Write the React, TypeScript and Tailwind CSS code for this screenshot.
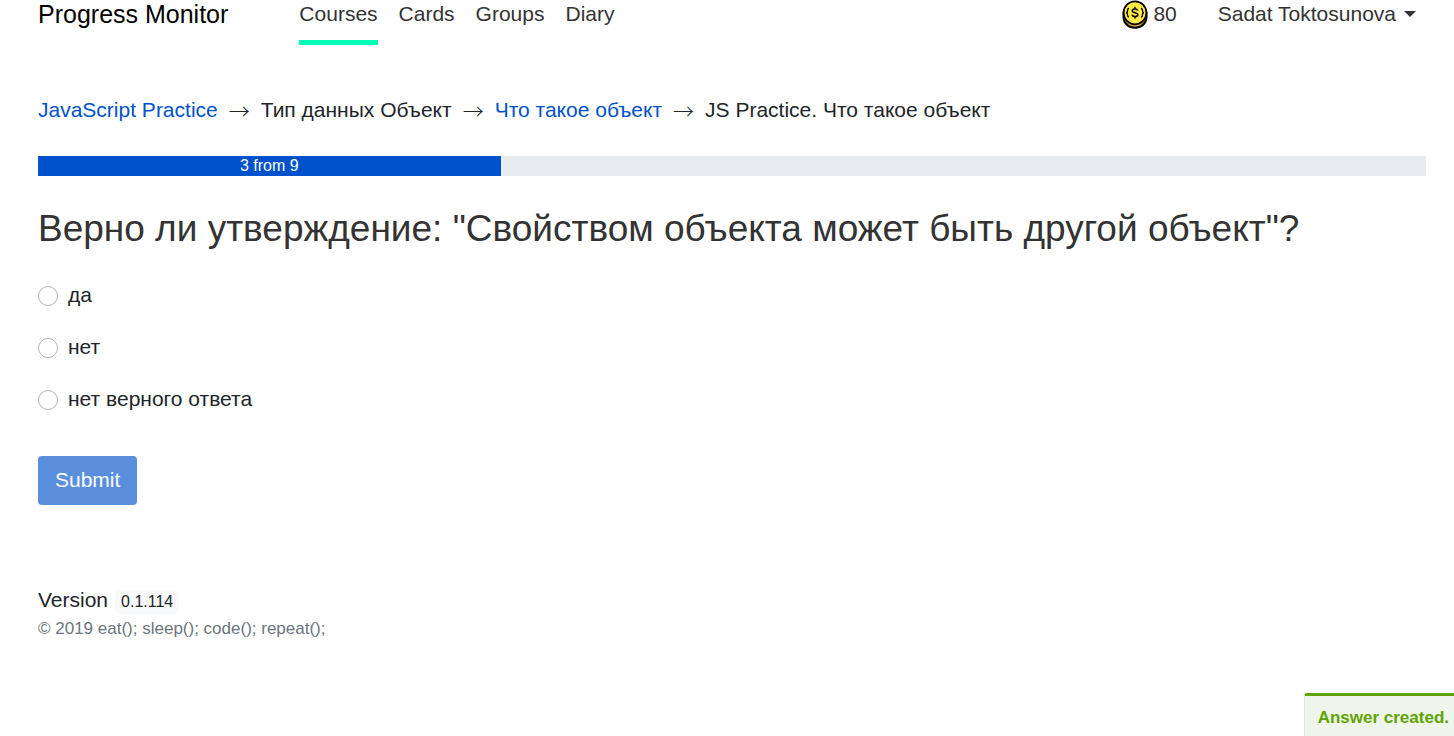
import { Fragment } from "react";

const navLinks = ["Courses", "Cards", "Groups", "Diary"];

const crumbs = [
  { text: "JavaScript Practice", link: true },
  { text: "Тип данных Объект", link: false },
  { text: "Что такое объект", link: true },
  { text: "JS Practice. Что такое объект", link: false },
];

const answers = ["да", "нет", "нет верного ответа"];

const progress = { current: 3, total: 9 };

function Coin() {
  return (
    <svg className="h-[30px] w-[26px] shrink-0" viewBox="0 0 26 30" aria-hidden="true">
      <path
        d="M1.500 12.500v4.500C1.500 23.300 6.600 27.800 13 27.800s11.500-4.500 11.500-10.800v-4.500z"
        fill="#e8a926"
        stroke="#000"
        strokeWidth="2"
      />
      <path d="M5 22.500v2.500M21 22.500v2.500" stroke="#000" strokeWidth="0.800" />
      <ellipse cx="13" cy="12.800" rx="11.400" ry="11.500" fill="#ffe947" stroke="#000" strokeWidth="1.800" />
      <g fill="none" stroke="#000">
        <path
          strokeWidth="1.400"
          d="M7 8.300C5.300 8.500 5.500 9.800 5.500 11c0 1-.3 1.500-1.300 1.700 1 .2 1.300.7 1.300 1.700 0 1.200-.2 2.500 1.500 2.700"
        />
        <path
          strokeWidth="1.400"
          d="M19 8.300c1.700.2 1.500 1.500 1.500 2.700 0 1 .3 1.500 1.300 1.700-1 .2-1.300.7-1.300 1.700 0 1.200.2 2.500-1.500 2.700"
        />
        <path
          strokeWidth="1.500"
          d="M15.700 10.600c-.3-1.100-1.300-1.700-2.700-1.700s-2.700.6-2.700 1.800c0 2.700 5.500 1.300 5.500 4 0 1.200-1.200 1.900-2.800 1.900s-2.700-.7-2.900-1.900"
        />
        <path strokeWidth="1.300" d="M13 6.800v2.100M13 16.600v2.100" />
      </g>
    </svg>
  );
}

function Header() {
  return (
    <header className="flex items-start justify-between pr-2.5">
      <div className="flex items-start">
        <a href="#home" className="mr-[71px] text-[25px] leading-7 text-black">
          Progress Monitor
        </a>
        <nav className="flex gap-[21px]">
          {navLinks.map((label, index) => (
            <a
              key={label}
              href={`#${label.toLowerCase()}`}
              className={
                index === 0
                  ? "border-b-[5px] border-[#00ffb7] pb-3 leading-7 text-[#333]"
                  : "border-b-[5px] border-transparent pb-3 leading-7 text-[#333]"
              }
            >
              {label}
            </a>
          ))}
        </nav>
      </div>
      <div className="flex items-start gap-[41px] leading-7 text-[#333]">
        <span className="flex gap-[5px]">
          <Coin />
          80
        </span>
        <button type="button" className="flex items-center gap-2">
          Sadat Toktosunova
          <svg className="h-1.5 w-3" viewBox="0 0 12 6" aria-hidden="true">
            <path d="M0 0h12L6 6z" fill="currentColor" />
          </svg>
        </button>
      </div>
    </header>
  );
}

function Question() {
  return (
    <form onSubmit={(event) => event.preventDefault()}>
      <fieldset>
        <legend className="text-[37px] leading-[46px] text-[#333]">
          Верно ли утверждение: "Свойством объекта может быть другой объект"?
        </legend>
        <div className="mt-7 flex flex-col gap-5">
          {answers.map((answer) => (
            <label key={answer} className="flex items-start gap-2.5 leading-[30px]">
              <input
                type="radio"
                name="answer"
                value={answer}
                className="my-1.5 size-5 appearance-none rounded-full border border-[#adb5bd] bg-white checked:border-[6px] checked:border-[#0052cc]"
              />
              {answer}
            </label>
          ))}
        </div>
      </fieldset>
      <button
        type="submit"
        disabled
        className="mt-10 rounded-[4px] bg-[#5a8fde] px-[17px] pt-2 pb-2.5 leading-[31px] text-white"
      >
        Submit
      </button>
    </form>
  );
}

export default function App() {
  return (
    <div className="min-h-screen bg-white pr-7 pl-[38px] font-['Liberation_Sans',Arial,sans-serif] text-[21px] text-[#212529]">
      <Header />
      <main>
        <nav aria-label="Breadcrumb" className="mt-[50px] flex flex-wrap gap-x-[11px] leading-[30px]">
          {crumbs.map((crumb, index) => (
            <Fragment key={crumb.text}>
              {index > 0 && <span className="font-['Noto_Sans_CJK_JP',sans-serif] font-light">→</span>}
              {crumb.link ? (
                <a href="#course" className="text-[#0052cc]">
                  {crumb.text}
                </a>
              ) : (
                <span>{crumb.text}</span>
              )}
            </Fragment>
          ))}
        </nav>
        <div className="mt-[31px] mb-[30px] bg-[#e9ecef]">
          <div
            className="bg-[#0052cc] text-center text-base leading-5 text-white"
            style={{ width: `${(progress.current / progress.total) * 100}%` }}
          >
            {progress.current} from {progress.total}
          </div>
        </div>
        <Question />
      </main>
      <footer className="mt-20">
        <div className="flex items-baseline gap-[7px] leading-[30px]">
          Version
          <span className="rounded-md bg-[#f8f9fa] px-1.5 text-base leading-6">0.1.114</span>
        </div>
        <p className="text-[17px] leading-7 text-[#6c757d]">
          © 2019 eat(); sleep(); code(); repeat();
        </p>
      </footer>
      <div
        role="status"
        className="fixed right-0 bottom-0 rounded-tl-[3px] border-t-[3px] border-l border-t-[#5ea400] border-l-[#dfe9d3] bg-[#eff5ea] pt-2 pr-[5px] pb-1 pl-[13px] text-[17px] leading-7 font-bold text-[#5ea400]"
      >
        Answer created.
      </div>
    </div>
  );
}
